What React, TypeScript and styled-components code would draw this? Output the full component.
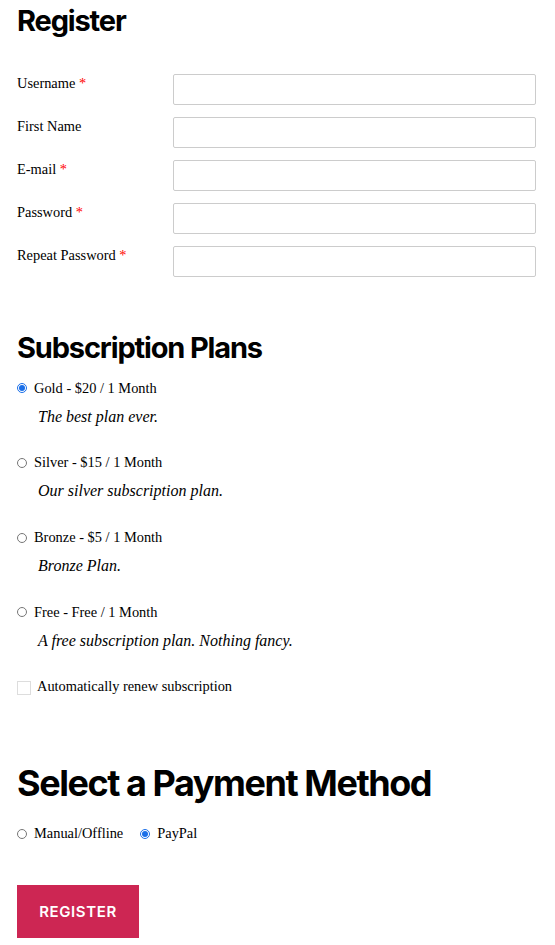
import React from 'react';
import styled, { createGlobalStyle } from 'styled-components';

const GlobalStyle = createGlobalStyle`
  body {
    margin: 0;
    background: #fff;
    color: #000;
    font-family: "Liberation Serif", "Times New Roman", serif;
  }
`;

const Page = styled.div`
  padding: 4px 19px 8px 17px;
`;

const Heading = styled.h2<{ $big?: boolean }>`
  font-family: Inter, "Noto Sans", sans-serif;
  font-weight: 700;
  font-size: ${(p) => (p.$big ? '36px' : '29px')};
  letter-spacing: -0.04em;
  line-height: 1.2;
  margin: 0;
`;

const FieldGrid = styled.div`
  display: grid;
  grid-template-columns: 156px 1fr;
  row-gap: 12px;
  margin-top: 35px;
`;

const Label = styled.label`
  font-size: 14.4px;
  padding-top: 1px;
`;

const Star = styled.span`
  color: #f00;
`;

const TextInput = styled.input`
  box-sizing: border-box;
  height: 31px;
  width: 100%;
  border: 1px solid #ccc;
  border-radius: 2px;
  background: #fff;
  margin: 0;
`;

const Section = styled.section<{ $space: number }>`
  margin-top: ${(p) => p.$space}px;
`;

const PlanList = styled.div`
  display: flex;
  flex-direction: column;
  gap: 28.8px;
  margin-top: 14px;
`;

const Plan = styled.div`
  display: flex;
  flex-direction: column;
  gap: 11px;
`;

const OptionLabel = styled.label`
  display: inline-flex;
  align-items: center;
  gap: 7px;
  font-size: 14.4px;
`;

const Radio = styled.input.attrs({ type: 'radio' })`
  width: 10px;
  height: 10px;
  margin: 0;
  accent-color: #1a6fe8;
`;

const Description = styled.div`
  font-style: italic;
  font-size: 16px;
  padding-left: 21px;
`;

const RenewRow = styled.label`
  display: flex;
  align-items: center;
  gap: 6px;
  font-size: 14.4px;
  margin-top: 28px;
`;

const CheckBox = styled.span`
  width: 12px;
  height: 12px;
  border: 1px solid #ddd;
  background: #fff;
  margin-top: 3px;
`;

const PaymentRow = styled.div`
  display: flex;
  gap: 17px;
  margin-top: 20px;
`;

const SubmitButton = styled.button`
  margin-top: 43px;
  width: 122px;
  height: 53px;
  border: none;
  background: #cd2653;
  color: #fff;
  font-family: Inter, "Noto Sans", sans-serif;
  font-weight: 600;
  font-size: 15px;
  letter-spacing: 0.04em;
  text-transform: uppercase;
  cursor: pointer;
`;

const fields = [
  { label: 'Username', required: true, type: 'text' },
  { label: 'First Name', required: false, type: 'text' },
  { label: 'E-mail', required: true, type: 'email' },
  { label: 'Password', required: true, type: 'password' },
  { label: 'Repeat Password', required: true, type: 'password' },
];

const plans = [
  { name: 'Gold - $20 / 1 Month', text: 'The best plan ever.', checked: true },
  { name: 'Silver - $15 / 1 Month', text: 'Our silver subscription plan.' },
  { name: 'Bronze - $5 / 1 Month', text: 'Bronze Plan.' },
  { name: 'Free - Free / 1 Month', text: 'A free subscription plan. Nothing fancy.' },
];

const App: React.FC = () => {
  return (
    <Page>
      <GlobalStyle />
      <Heading>Register</Heading>
      <FieldGrid>
        {fields.map((f) => (
          <React.Fragment key={f.label}>
            <Label>
              {f.label} {f.required && <Star>*</Star>}
            </Label>
            <TextInput type={f.type} />
          </React.Fragment>
        ))}
      </FieldGrid>

      <Section $space={54}>
        <Heading>Subscription Plans</Heading>
        <PlanList>
          {plans.map((p) => (
            <Plan key={p.name}>
              <OptionLabel>
                <Radio name="plan" defaultChecked={p.checked} />
                {p.name}
              </OptionLabel>
              <Description>{p.text}</Description>
            </Plan>
          ))}
        </PlanList>
        <RenewRow>
          <CheckBox />
          Automatically renew subscription
        </RenewRow>
      </Section>

      <Section $space={67}>
        <Heading $big>Select a Payment Method</Heading>
        <PaymentRow>
          <OptionLabel>
            <Radio name="pay" />
            Manual/Offline
          </OptionLabel>
          <OptionLabel>
            <Radio name="pay" defaultChecked />
            PayPal
          </OptionLabel>
        </PaymentRow>
      </Section>

      <SubmitButton>Register</SubmitButton>
    </Page>
  );
};

export default App;
